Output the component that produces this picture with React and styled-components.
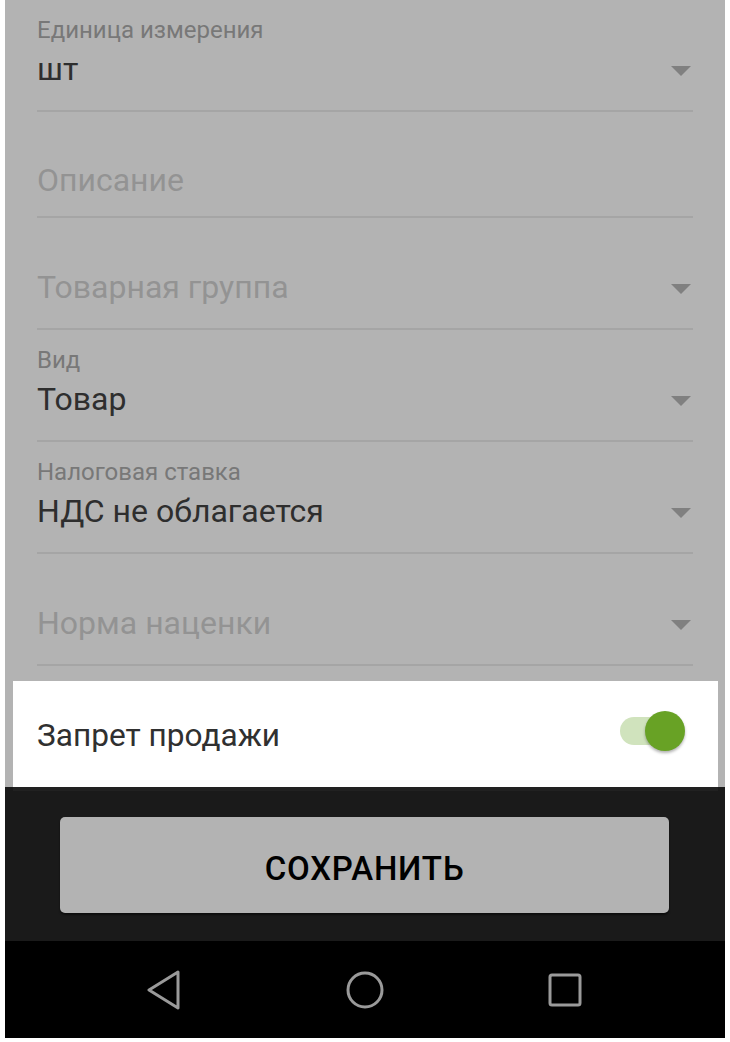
import React from "react";
import styled, { createGlobalStyle } from "styled-components";

const Global = createGlobalStyle`
  html, body { margin: 0; padding: 0; background: #ffffff; }
  body { font-family: Roboto, "Noto Sans", "Liberation Sans", sans-serif; }
`;

const Frame = styled.div`
  width: 720px;
  height: 1038px;
  margin-left: 5px;
  display: flex;
  flex-direction: column;
  background: #b3b3b3;
  overflow: hidden;
`;

const Form = styled.div`
  display: flex;
  flex-direction: column;
  padding: 0 32px;
`;

const Field = styled.div`
  height: ${(p) => p.$h || 112}px;
  box-sizing: border-box;
  border-bottom: 2px solid #a5a5a5;
  display: flex;
  flex-direction: column;
  justify-content: flex-end;
`;

const Label = styled.div`
  font-size: 24px;
  line-height: 28px;
  color: #787878;
  margin-bottom: 5px;
`;

const Row = styled.div`
  display: flex;
  align-items: center;
  justify-content: space-between;
  height: 40px;
  margin-bottom: ${(p) => p.$mb ?? 21}px;
`;

const Value = styled.div`
  font-size: 32px;
  line-height: 40px;
  color: ${(p) => (p.$placeholder ? "#939393" : "#2e2e2e")};
`;

const Arrow = styled.div`
  width: 0;
  height: 0;
  border-left: 10px solid transparent;
  border-right: 10px solid transparent;
  border-top: 10px solid #808080;
  margin-right: 2px;
  margin-top: 4px;
`;

const SwitchRowWrap = styled.div`
  margin-top: 15px;
  padding: 0 7px 0 8px;
  display: flex;
`;

const SwitchRow = styled.div`
  flex: 1;
  height: 106px;
  background: #ffffff;
  display: flex;
  align-items: center;
  justify-content: space-between;
  padding: 0 38px 0 24px;
`;

const SwitchText = styled.div`
  font-size: 31.6px;
  color: #303030;
  margin-top: 2px;
`;

const Track = styled.div`
  position: relative;
  width: 60px;
  height: 28px;
  border-radius: 14px;
  background: #d0e3bd;
  margin-top: -6px;
`;

const Thumb = styled.div`
  position: absolute;
  width: 40px;
  height: 40px;
  border-radius: 50%;
  background: #68a225;
  top: -6px;
  right: -5px;
  box-shadow: 0 2px 3px rgba(0, 0, 0, 0.3);
`;

const Bottom = styled.div`
  flex: 1;
  display: flex;
  flex-direction: column;
  background: #1a1a1a;
`;

const ShadowBand = styled.div`
  height: 4px;
  margin: 0 7px 0 8px;
  background: #212121;
`;

const ButtonArea = styled.div`
  height: 150px;
  box-sizing: border-box;
  padding: 26px 56px 0 55px;
`;

const SaveButton = styled.div`
  height: 96px;
  border-radius: 5px;
  background: #b3b3b3;
  box-shadow: 0 2px 2px rgba(0, 0, 0, 0.5);
  display: flex;
  align-items: center;
  justify-content: center;
  font-size: 33px;
  font-weight: 500;
  color: #000;
  letter-spacing: 0.8px;
  padding-top: 6px;
  box-sizing: border-box;
`;

const NavBar = styled.div`
  flex: 1;
  background: #000;
  display: grid;
  grid-template-columns: repeat(3, 200px);
  justify-content: center;
  align-items: center;
  justify-items: center;
`;

const fields = [
  { label: "Единица измерения", value: "шт", arrow: true },
  { placeholder: "Описание", h: 106, mb: 16 },
  { placeholder: "Товарная группа", arrow: true },
  { label: "Вид", value: "Товар", arrow: true },
  { label: "Налоговая ставка", value: "НДС не облагается", arrow: true },
  { placeholder: "Норма наценки", arrow: true },
];

export default function App() {
  return (
    <>
      <Global />
      <Frame>
        <Form>
          {fields.map((f, i) => (
            <Field key={i} $h={f.h}>
              {f.label && <Label>{f.label}</Label>}
              <Row $mb={f.mb}>
                <Value $placeholder={!!f.placeholder}>{f.label ? f.value : f.placeholder}</Value>
                {f.arrow && <Arrow />}
              </Row>
            </Field>
          ))}
        </Form>
        <SwitchRowWrap>
          <SwitchRow>
            <SwitchText>Запрет продажи</SwitchText>
            <Track>
              <Thumb />
            </Track>
          </SwitchRow>
        </SwitchRowWrap>
        <Bottom>
          <ShadowBand />
          <ButtonArea>
            <SaveButton>СОХРАНИТЬ</SaveButton>
          </ButtonArea>
          <NavBar>
            <svg width="40" height="40" viewBox="0 0 40 40">
              <path d="M33 2 L4 20 L33 38 Z" fill="none" stroke="#9a9a9a" strokeWidth="3" strokeLinejoin="round" />
            </svg>
            <svg width="40" height="40" viewBox="0 0 40 40">
              <circle cx="20" cy="20" r="17" fill="none" stroke="#9a9a9a" strokeWidth="3" />
            </svg>
            <svg width="40" height="40" viewBox="0 0 40 40">
              <rect x="5" y="5" width="30" height="30" rx="2" fill="none" stroke="#9a9a9a" strokeWidth="3" />
            </svg>
          </NavBar>
        </Bottom>
      </Frame>
    </>
  );
}
